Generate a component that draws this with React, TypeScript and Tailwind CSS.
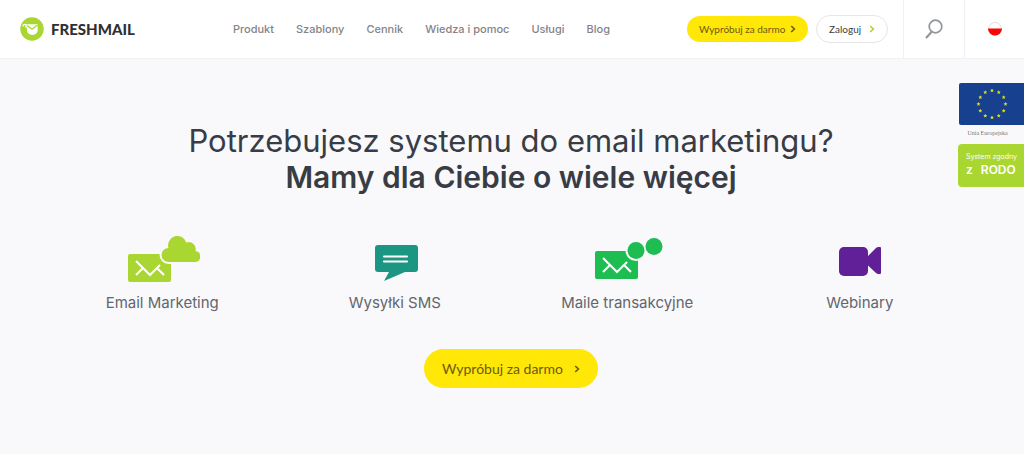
import type { ReactNode } from 'react';

const navLinks = ['Produkt', 'Szablony', 'Cennik', 'Wiedza i pomoc', 'Usługi', 'Blog'];

const Chevron = ({ className }: { className: string }) => (
  <svg viewBox="0 0 6 8" fill="none" stroke="currentColor" strokeWidth="1.6" className={className} aria-hidden="true">
    <path d="M1.2 1 4.4 4 1.2 7" />
  </svg>
);

const Logo = () => (
  <a href="#" className="flex shrink-0 items-center gap-[7px]">
    <svg viewBox="0 0 24 24" className="size-6" aria-hidden="true">
      <circle cx="12" cy="12" r="11.7" fill="#aad631" />
      <path d="M6.5 7.3h11.2v5.4c0 3-2.2 5.2-5.2 5.2-3.4 0-5.6-2.3-5.6-5.2z" fill="#fff" />
      <path d="M2.7 9.3c.5-1.800 2.400-2.500 3.500-1.100.8 1-.1 1.900-1 1.400" fill="none" stroke="#fff" strokeWidth="1.3" />
      <path d="m7 8.400 4.400 3.400c.5.3.9.3 1.300 0l4.800-3.700" fill="none" stroke="#aad631" strokeWidth="1.3" />
    </svg>
    <span className="font-['Lato',sans-serif] text-[15px] font-black text-[#2f3033]">FRESHMAIL</span>
  </a>
);

const Envelope = ({ x, y }: { x: number; y: number }) => (
  <g transform={`translate(${x} ${y})`}>
    <rect width="43" height="28" rx="2" fill="currentColor" />
    <path d="m8 7 14 14L32 11M8 21l7-7M36 21l-7-7" fill="none" stroke="#fff" strokeWidth="2" />
  </g>
);

const EmailIcon = () => (
  <svg viewBox="0 0 76 50" className="h-[50px] w-[76px] text-[#aad631]" aria-hidden="true">
    <Envelope x={4} y={19} />
    <path
      d="M44.5 27a7 7 0 0 1 0-14 9.200 9.200 0 0 1 17.800-5.500 7 7 0 0 1 9.200 8.500 5.600 5.600 0 0 1 .5 11z"
      fill="currentColor"
      stroke="#f9f9fb"
      strokeWidth="4"
      paintOrder="stroke"
    />
  </svg>
);

const SmsIcon = () => (
  <svg viewBox="0 0 76 50" className="h-[50px] w-[76px] text-[#1b9683]" aria-hidden="true">
    <path d="M21 10h37a3 3 0 0 1 3 3v21a3 3 0 0 1-3 3H48l-21 9 5-9H21a3 3 0 0 1-3-3V13a3 3 0 0 1 3-3z" fill="currentColor" />
    <path d="M27 21.500h23M27 26.500h23" stroke="#fff" strokeWidth="2.2" strokeLinecap="round" />
  </svg>
);

const TransactionIcon = () => (
  <svg viewBox="0 0 76 50" className="h-[50px] w-[76px] text-[#1dbd51]" aria-hidden="true">
    <Envelope x={6} y={16} />
    <circle cx="47" cy="15.5" r="10.5" fill="#f9f9fb" />
    <circle cx="47" cy="15.5" r="8.5" fill="currentColor" />
    <circle cx="65" cy="11.5" r="8.5" fill="currentColor" />
  </svg>
);

const WebinarIcon = () => (
  <svg viewBox="0 0 76 50" className="h-[50px] w-[76px] text-[#611f98]" aria-hidden="true">
    <rect x="17" y="12" width="29" height="29" rx="5" fill="currentColor" />
    <path d="M45.5 21.500 54 13q1-1 2.500-1H58q1 0 1 1v25q0 1-1 1h-1.500q-1.500 0-2.500-1L45.500 30z" fill="currentColor" />
  </svg>
);

const features: { label: string; icon: ReactNode }[] = [
  { label: 'Email Marketing', icon: <EmailIcon /> },
  { label: 'Wysyłki SMS', icon: <SmsIcon /> },
  { label: 'Maile transakcyjne', icon: <TransactionIcon /> },
  { label: 'Webinary', icon: <WebinarIcon /> },
];

const EuFlag = () => (
  <svg viewBox="0 0 65 42" className="h-[42px] w-[65px]" role="img" aria-label="Unia Europejska">
    <path d="M2 0h63v42H2a2 2 0 0 1-2-2V2a2 2 0 0 1 2-2z" fill="#17418f" />
    {Array.from({ length: 12 }, (_, i) => (
      <path
        key={i}
        d="M0-2 .6-.7 2-.6.9.3l.4 1.500L0 1l-1.300.8.400-1.500L-2-.6l1.400-.1z"
        fill="#e5df18"
        transform={`translate(${33 + 13.5 * Math.sin((i * Math.PI) / 6)} ${21 - 13.5 * Math.cos((i * Math.PI) / 6)})`}
      />
    ))}
  </svg>
);

const App = () => {
  return (
    <div className="min-h-screen bg-white font-['Inter',sans-serif]">
      <header className="flex h-[59px] items-stretch border-b border-[#f1f1f3] pl-5">
        <Logo />
        <nav className="ml-[98px] flex flex-1 items-center gap-[22px] text-[11px] font-medium whitespace-nowrap text-[#85838a]">
          {navLinks.map((link) => (
            <a key={link} href="#" className="hover:text-[#383d45]">{link}</a>
          ))}
        </nav>

        <div className="mr-[15px] flex shrink-0 items-center gap-2 font-['Lato',sans-serif] text-[10px] whitespace-nowrap">
          <button type="button" className="flex h-[26px] w-[121px] items-center justify-between rounded-full bg-[#ffe707] px-3 text-[#705910]">
            Wypróbuj za darmo
            <Chevron className="h-2 w-1.5 shrink-0" />
          </button>
          <button type="button" className="flex h-7 w-[72px] items-center justify-between rounded-full border border-[#e6e6e8] bg-white px-3 text-[#3f3f42]">
            Zaloguj
            <Chevron className="h-2 w-1.5 shrink-0 text-[#aad631]" />
          </button>
        </div>

        <button type="button" aria-label="Szukaj" className="flex w-[61px] shrink-0 items-center justify-center border-l border-[#f1f1f3] text-[#90969a]">
          <svg viewBox="0 0 20 20" fill="none" stroke="currentColor" className="size-5" aria-hidden="true">
            <circle cx="11.5" cy="7.5" r="6.3" strokeWidth="1.7" />
            <path d="M7.500 13 2 19" strokeWidth="2.2" />
          </svg>
        </button>
        <button type="button" aria-label="Polski" className="flex w-[60px] shrink-0 items-center justify-center border-l border-[#f1f1f3]">
          <svg viewBox="0 0 14 14" className="size-3.5" aria-hidden="true">
            <circle cx="7" cy="7" r="6.5" fill="#fff" stroke="#dedede" />
            <path d="M0 6.500h14A7 7 0 0 1 0 6.500z" fill="#f90606" />
          </svg>
        </button>
      </header>

      <main className="relative bg-[#f9f9fb] pt-[63px] pr-0.5 pb-[66px]">
        <h1 className="text-center text-[31px] leading-[37px] font-normal text-[#383d45]">
          Potrzebujesz systemu do email marketingu?
          <strong className="block text-[30px] font-semibold">Mamy dla Ciebie o wiele więcej</strong>
        </h1>

        <ul className="mx-auto mt-[39px] grid max-w-[930px] grid-cols-4">
          {features.map(({ label, icon }) => (
            <li key={label}>
              <a href="#" className="flex flex-col items-center gap-2 text-[15px] leading-5 text-[#62666e]">
                {icon}
                {label}
              </a>
            </li>
          ))}
        </ul>

        <button type="button" className="mx-auto mt-9 flex h-[39px] w-[174px] items-center justify-between rounded-full bg-[#ffe707] px-[18px] font-['Lato',sans-serif] text-sm whitespace-nowrap text-[#705910]">
          Wypróbuj za darmo
          <Chevron className="h-2 w-1.5 shrink-0" />
        </button>

        {/* Badges pinned to the right edge of the hero */}
        <aside className="absolute top-6 right-0 flex flex-col items-end">
          <EuFlag />
          <span className="mt-1 w-[65px] pr-2 text-center font-['Liberation_Serif',serif] text-[6px] leading-[8px] text-[#777]">Unia Europejska</span>
          <a href="#" className="mt-[7px] h-[43px] w-[66px] rounded-l-sm bg-[#aad631] pt-2 pl-2 whitespace-nowrap text-white">
            <span className="block text-[7px] leading-[10px]">System zgodny</span>
            <span className="flex gap-2 text-xs leading-4 font-semibold">
              <span>z</span>
              <span>RODO</span>
            </span>
          </a>
        </aside>
      </main>
    </div>
  );
};

export default App;
